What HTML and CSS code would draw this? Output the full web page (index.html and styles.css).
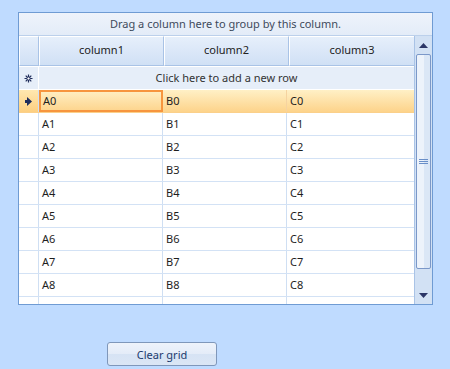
FILE: index.html
```
<!DOCTYPE html>
<html lang="en">
<head>
<meta charset="UTF-8">
<title>Grid</title>
<link rel="stylesheet" href="styles.css">
</head>
<body>
<div class="grid">
  <div class="group-panel">Drag a column here to group by this column.</div>
  <div class="grid-body">
    <div class="rows">
      <div class="row header">
        <div class="ind"></div>
        <div class="cell">column1</div>
        <div class="cell">column2</div>
        <div class="cell">column3</div>
      </div>
      <div class="row new-row">
        <div class="ind"><svg width="9" height="9" viewBox="0 0 9 9"><path d="M4.5 0.5v8M0.5 4.5h8M1.7 1.7l5.6 5.6M7.3 1.7l-5.6 5.6" stroke="#1f2d5c" stroke-width="1.2"/><circle cx="4.5" cy="4.5" r="1.6" fill="#fff" stroke="#1f2d5c"/></svg></div>
        <div class="new-text">Click here to add a new row</div>
      </div>
      <div class="row data current">
        <div class="ind"><svg width="7" height="9" viewBox="0 0 7 9"><path d="M0 3h2V0l5 4.5L2 9V6H0z" fill="#1f2d5c"/></svg></div>
        <div class="cell focus">A0</div><div class="cell">B0</div><div class="cell">C0</div>
      </div>
      <div class="row data"><div class="ind"></div><div class="cell">A1</div><div class="cell">B1</div><div class="cell">C1</div></div>
      <div class="row data"><div class="ind"></div><div class="cell">A2</div><div class="cell">B2</div><div class="cell">C2</div></div>
      <div class="row data"><div class="ind"></div><div class="cell">A3</div><div class="cell">B3</div><div class="cell">C3</div></div>
      <div class="row data"><div class="ind"></div><div class="cell">A4</div><div class="cell">B4</div><div class="cell">C4</div></div>
      <div class="row data"><div class="ind"></div><div class="cell">A5</div><div class="cell">B5</div><div class="cell">C5</div></div>
      <div class="row data"><div class="ind"></div><div class="cell">A6</div><div class="cell">B6</div><div class="cell">C6</div></div>
      <div class="row data"><div class="ind"></div><div class="cell">A7</div><div class="cell">B7</div><div class="cell">C7</div></div>
      <div class="row data"><div class="ind"></div><div class="cell">A8</div><div class="cell">B8</div><div class="cell">C8</div></div>
      <div class="row data"><div class="ind"></div><div class="cell"></div><div class="cell"></div><div class="cell"></div></div>
    </div>
    <div class="scrollbar">
      <div class="sb-btn"><svg width="9" height="5" viewBox="0 0 9 5"><path d="M0 5L4.5 0L9 5z" fill="#2b3566"/></svg></div>
      <div class="sb-thumb"><span class="grip"></span></div>
      <div class="sb-track"><svg width="9" height="5" viewBox="0 0 9 5"><path d="M0 0h9L4.5 5z" fill="#2b3566"/></svg></div>
    </div>
  </div>
</div>
<div class="actions">
  <button class="btn">Clear grid</button>
</div>
</body>
</html>
```
FILE: styles.css
```
html,body{margin:0;padding:0;}
body{background:#bfdbff;font-family:"Noto Sans","DejaVu Sans",sans-serif;font-size:11px;color:#1e1e1e;width:450px;height:369px;overflow:hidden;}

/* ---------- GRID ---------- */
.grid{margin:12px 0 0 18px;width:413px;height:291px;border:1px solid #6f9bd3;background:#fff;display:flex;flex-direction:column;overflow:hidden;}
.group-panel{height:22px;line-height:22px;flex:none;text-align:center;color:#3e4a5c;background:linear-gradient(#eef3fb,#e3ecf8);border-bottom:1px solid #bcd0eb;}
.grid-body{flex:1;display:flex;min-height:0;}
.rows{width:395px;overflow:hidden;}

.row{display:flex;height:23px;}
.ind{width:19px;flex:none;display:flex;align-items:center;justify-content:center;border-right:1px solid #cfdff3;}
.cell{width:124px;flex:none;border-right:1px solid #cfdff3;padding-left:3px;box-sizing:border-box;line-height:22px;white-space:nowrap;}
.row .cell:last-child{width:125px;border-right:none;}

.header{height:30px;background:#d7e5f7;}
.header .ind,.header .cell{border:1px solid #fff;border-right-color:#a9c3e6;border-bottom-color:#a9c3e6;background:linear-gradient(#e6effb,#d0e0f5);}
.header .ind{width:20px;box-sizing:border-box;}
.header .cell{text-align:center;line-height:26px;padding:0;width:125px;color:#222;}
.header .cell:last-child{width:125px;}

.new-row{background:#e6eef9;border-top:1px solid #fff;height:22px;border-bottom:1px solid #fff;}
.new-row .ind{border-right:1px solid #fff;}
.new-text{flex:1;text-align:center;line-height:22px;color:#333;}

.data{border-bottom:1px solid #d3e2f5;height:22px;}
.data .ind{background:#fff;}
.current{background:linear-gradient(#fff0c6,#fdd38a);border-bottom-color:#fbd08a;}
.current .ind{background:linear-gradient(#ffe8b0,#fdcf80);}
.current .cell{border-right-color:#f5d3a0;}
.focus{border:2px solid #f7953e !important;line-height:18px;padding-left:2px;}

/* ---------- SCROLLBAR ---------- */
.scrollbar{width:18px;flex:none;display:flex;flex-direction:column;background:#d2e1f4;border-left:1px solid #a9c3e6;box-sizing:border-box;}
.sb-btn{height:18px;display:flex;align-items:center;justify-content:center;}
.sb-thumb{height:215px;margin:0 1px;border:1px solid #7b98c9;border-radius:2px;background:linear-gradient(90deg,#edf3fb 55%,#dbe7f6 55%);display:flex;align-items:center;justify-content:center;box-sizing:border-box;}
.grip{width:9px;height:5px;border-top:1px solid #6a8fc8;border-bottom:1px solid #6a8fc8;position:relative;box-sizing:border-box;}
.grip::after{content:"";position:absolute;left:0;right:0;top:1px;border-top:1px solid #6a8fc8;}
.sb-track{flex:1;display:flex;align-items:flex-end;justify-content:center;padding-bottom:6px;}

/* ---------- BUTTON ---------- */
.actions{padding:37px 0 0 107px;}
.btn{width:110px;height:24px;border:1px solid #7f97ba;border-radius:3px;background:linear-gradient(#eef3fb 0,#e4ecf8 50%,#d6e3f4 50%,#dbe6f5 100%);font-family:inherit;font-size:11px;color:#1c3b6e;padding:0;}
```
